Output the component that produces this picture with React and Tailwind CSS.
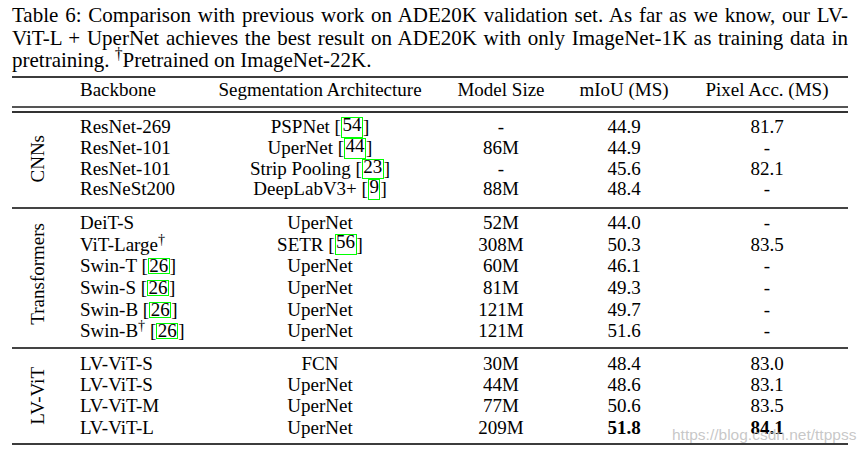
import React from "react";

const Cite = ({ n }) => (
  <span className="inline-block border-[1.5px] border-[#00ff00] leading-[14px] px-[0.5px]">{n}</span>
);

const Ref = ({ n }) => (
  <>
    [<Cite n={n} />]
  </>
);

const Dag = () => <sup>†</sup>;

const cnnRows = [
  ["ResNet-269", <>PSPNet <Ref n="54" /></>, "-", "44.9", "81.7"],
  ["ResNet-101", <>UperNet <Ref n="44" /></>, "86M", "44.9", "-"],
  ["ResNet-101", <>Strip Pooling <Ref n="23" /></>, "-", "45.6", "82.1"],
  ["ResNeSt200", <>DeepLabV3+ <Ref n="9" /></>, "88M", "48.4", "-"],
];

const trRows = [
  ["DeiT-S", "UperNet", "52M", "44.0", "-"],
  [<>ViT-Large<Dag /></>, <>SETR <Ref n="56" /></>, "308M", "50.3", "83.5"],
  [<>Swin-T <Ref n="26" /></>, "UperNet", "60M", "46.1", "-"],
  [<>Swin-S <Ref n="26" /></>, "UperNet", "81M", "49.3", "-"],
  [<>Swin-B <Ref n="26" /></>, "UperNet", "121M", "49.7", "-"],
  [<>Swin-B<Dag /> <Ref n="26" /></>, "UperNet", "121M", "51.6", "-"],
];

const lvRows = [
  ["LV-ViT-S", "FCN", "30M", "48.4", "83.0"],
  ["LV-ViT-S", "UperNet", "44M", "48.6", "83.1"],
  ["LV-ViT-M", "UperNet", "77M", "50.6", "83.5"],
  ["LV-ViT-L", "UperNet", "209M", <b>51.8</b>, <b>84.1</b>],
];

const Row = ({ r, lh }) => (
  <div className={`grid grid-cols-[168px_180px_30px_122px_124px_162px] ${lh}`}>
    <div className="pl-[18px] whitespace-nowrap">{r[0]}</div>
    <div className="flex justify-center whitespace-nowrap">{r[1]}</div>
    <div />
    <div className="flex justify-center whitespace-nowrap">{r[2]}</div>
    <div className="flex justify-center whitespace-nowrap">{r[3]}</div>
    <div className="flex justify-center whitespace-nowrap">{r[4]}</div>
  </div>
);

const Section = ({ label, rows, lh, pad, labelPad = "" }) => (
  <div className={`flex ${pad}`}>
    <div className={`w-[50px] flex items-center justify-center ${labelPad}`}>
      <span className="[writing-mode:vertical-rl] rotate-180 whitespace-nowrap leading-[21px]">{label}</span>
    </div>
    <div className="flex flex-col">
      {rows.map((r, i) => (
        <Row key={i} r={r} lh={lh} />
      ))}
    </div>
  </div>
);

export default function App() {
  return (
    <div className="relative w-[868px] h-[455px] overflow-hidden bg-white text-black font-['Liberation_Serif',serif]">
      <div className="pl-[12px] pt-[4px] w-[848px] text-[21px] leading-[22.5px]">
        <div className="text-justify [text-align-last:justify] whitespace-nowrap">
          Table 6: Comparison with previous work on ADE20K validation set. As far as we know, our LV-
        </div>
        <div className="text-justify [text-align-last:justify]">
          ViT-L + UperNet achieves the best result on ADE20K with only ImageNet-1K as training data in
        </div>
        <div>
          pretraining. <Dag />Pretrained on ImageNet-22K.
        </div>
      </div>

      <div className="ml-[12px] w-[836px] text-[19px]">
        <div className="mt-[4px] h-[2px] bg-[#3c3c3c]" />
        <div className="flex h-[28.5px] pt-[1.5px] leading-[21px]">
          <div className="w-[50px]" />
          <Row r={["Backbone", "Segmentation Architecture", "Model Size", "mIoU (MS)", "Pixel Acc. (MS)"]} lh="leading-[21px]" />
        </div>
        <div className="h-[2px] bg-[#555]" />
        <div className="h-[3px]" />
        <div className="h-[2px] bg-[#333]" />

        <Section label="CNNs" rows={cnnRows} lh="leading-[20.8px]" pad="pt-[4px] pb-[7px]" />
        <div className="h-[2px] bg-[#444]" />
        <Section label="Transformers" rows={trRows} lh="leading-[21.6px]" pad="pt-[3px] pb-[5px]" labelPad="pb-[6px]" />
        <div className="h-[2px] bg-[#444]" />
        <Section label="LV-ViT" rows={lvRows} lh="leading-[21.3px]" pad="pt-[4px] pb-[5.5px]" />
        <div className="h-[2px] bg-[#3c3c3c]" />
      </div>

      <div className="absolute left-[672px] top-[427px] text-[15.5px] leading-[15.5px] font-['Liberation_Sans',sans-serif] text-[rgba(185,185,185,0.8)] whitespace-nowrap">
        https://blog.csdn.net/ttppss
      </div>
    </div>
  );
}
